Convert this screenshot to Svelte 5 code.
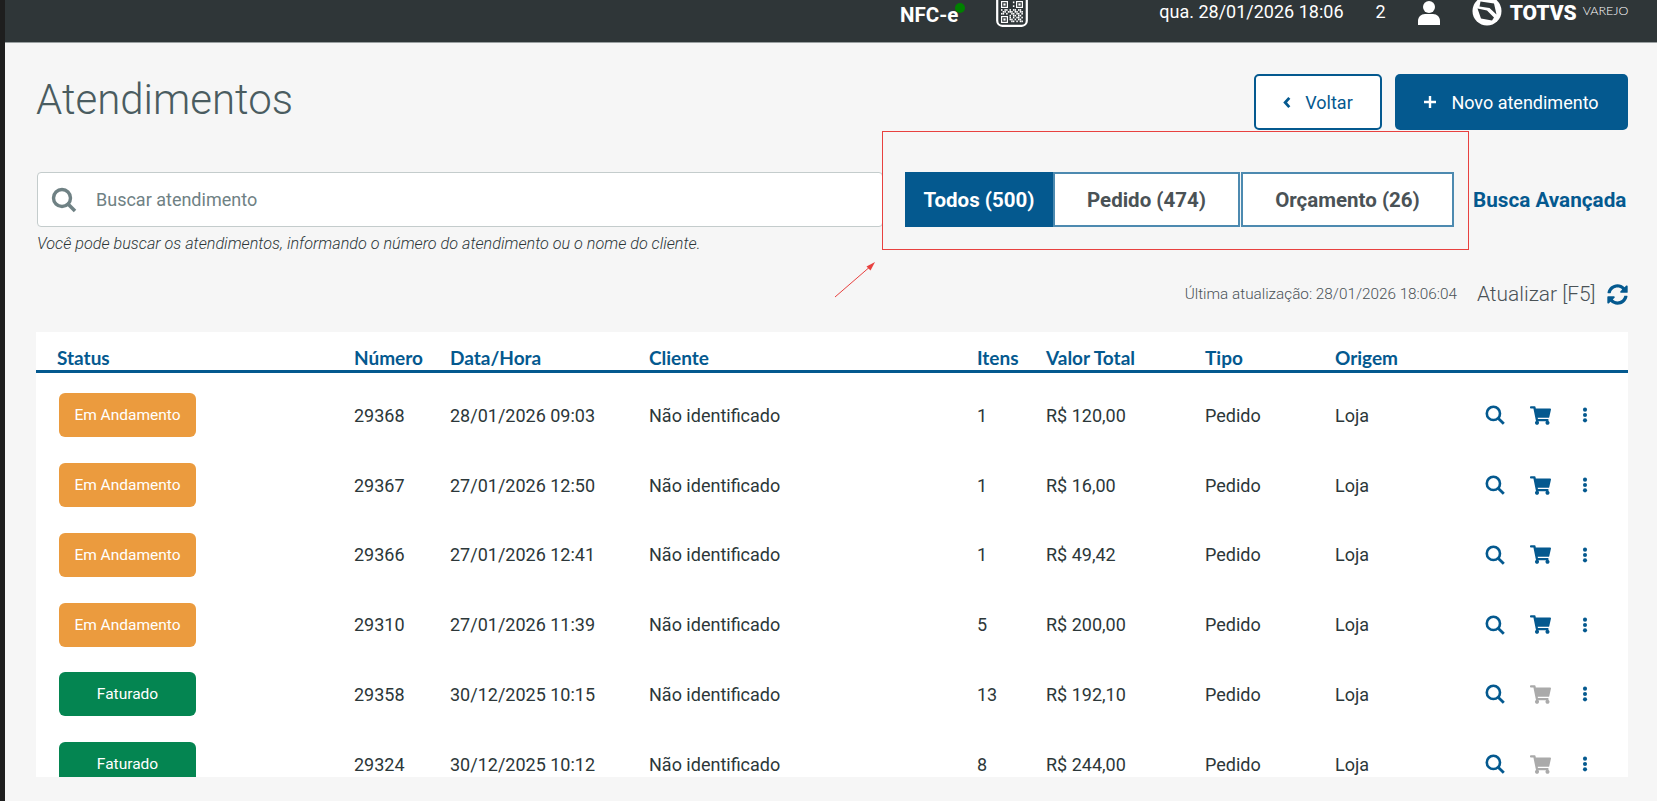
<script>
	const rows = [
		{ status: 'Em Andamento', num: '29368', date: '28/01/2026 09:03', items: 1, total: 'R$ 120,00' },
		{ status: 'Em Andamento', num: '29367', date: '27/01/2026 12:50', items: 1, total: 'R$ 16,00' },
		{ status: 'Em Andamento', num: '29366', date: '27/01/2026 12:41', items: 1, total: 'R$ 49,42' },
		{ status: 'Em Andamento', num: '29310', date: '27/01/2026 11:39', items: 5, total: 'R$ 200,00' },
		{ status: 'Faturado', num: '29358', date: '30/12/2025 10:15', items: 13, total: 'R$ 192,10' },
		{ status: 'Faturado', num: '29324', date: '30/12/2025 10:12', items: 8, total: 'R$ 244,00' }
	];

	const cols = ['Status', 'Número', 'Data/Hora', 'Cliente', 'Itens', 'Valor Total', 'Tipo', 'Origem', ''];

	// qr code cells, just a fixed pattern
	const qrBits = [
		'0000000100000',
		'0000000000000',
		'0000000100000',
		'0000000000000',
		'1011010110110',
		'0110111011011',
		'1101001101101',
		'0000010110110',
		'0000010101101',
		'0000011010110',
		'0000001101011'
	];
	const finders = [
		[5, 1],
		[20, 1],
		[5, 16]
	];
</script>

<div class="root">
	<div class="strip"></div>
	<div class="page">
		<header class="topbar">
			<span class="nfce">NFC-e<i class="dot"></i></span>
			<svg class="qr" viewBox="0 0 32 32" width="32" height="32">
				<rect x="1.2" y="-10" width="29.6" height="35.8" rx="5" fill="none" stroke="#fff" stroke-width="2.2" />
				{#each qrBits as line, y}
					{#each line.split('') as bit, x}
						{#if bit === '1'}
							<rect x={x * 1.7 + 5} y={y * 1.9 + 1.5} width="1.5" height="1.7" fill="#fff" />
						{/if}
					{/each}
				{/each}
				{#each finders as [fx, fy]}
					<rect x={fx + 0.6} y={fy + 0.6} width="5.8" height="5.8" fill="none" stroke="#fff" stroke-width="1.2" />
					<rect x={fx + 2.4} y={fy + 2.4} width="2.2" height="2.2" fill="#fff" />
				{/each}
			</svg>
			<span class="when">qua. 28/01/2026 18:06</span>
			<span class="count">2</span>
			<svg class="user" viewBox="0 0 24 26" width="24" height="26">
				<circle cx="12" cy="7" r="6" fill="#fff" />
				<path d="M1 25v-4c0-4 3-7 7-7h8c4 0 7 3 7 7v4z" fill="#fff" />
			</svg>
			<svg class="logo" viewBox="0 0 30 30" width="30" height="30">
				<circle cx="15" cy="11" r="14.5" fill="#fff" />
				<path d="M8.5 1.5 22 3.5l2.5 11-7-6.5-10-1.5zM5.5 8.5l9.5 2 7 7-2 3-11-2z" fill="#2f3638" />
			</svg>
			<span class="totvs">TOTVS</span>
			<span class="varejo">VAREJO</span>
		</header>

		<main>
			<div class="title-row">
				<h1>Atendimentos</h1>
				<div class="actions-top">
					<button class="btn ghost">
						<svg viewBox="0 0 10 14" width="10" height="13"><path d="M7.5 2 3 7l4.5 5" fill="none" stroke="currentColor" stroke-width="3" /></svg>
						Voltar
					</button>
					<button class="btn solid">
						<svg viewBox="0 0 14 14" width="14" height="14"><path d="M7 1v12M1 7h12" fill="none" stroke="currentColor" stroke-width="2.4" /></svg>
						Novo atendimento
					</button>
				</div>
			</div>

			<div class="search-row">
				<div class="search">
					<svg viewBox="0 0 26 26" width="26" height="26">
						<circle cx="11" cy="11" r="8.5" fill="none" stroke="#6f8184" stroke-width="3.4" />
						<path d="m17 17 7 7" stroke="#6f8184" stroke-width="3.6" />
					</svg>
					<span>Buscar atendimento</span>
				</div>
				<div class="segments">
					<button class="seg on s1">Todos (500)</button>
					<button class="seg s2">Pedido (474)</button>
					<button class="seg s3">Orçamento (26)</button>
				</div>
				<a href="#busca" class="advanced">Busca Avançada</a>
			</div>
			<p class="hint">Você pode buscar os atendimentos, informando o número do atendimento ou o nome do cliente.</p>

			<div class="update-row">
				<span class="last">Última atualização: 28/01/2026 18:06:04</span>
				<span class="refresh">Atualizar [F5]</span>
				<svg viewBox="0 0 512 512" width="21" height="21">
					<path fill="#04598f" d="M370.72 133.28C339.458 104.008 298.888 87.962 255.848 88c-77.458.068-144.328 53.178-162.791 126.85-1.344 5.363-6.122 9.15-11.651 9.15H24.103c-7.498 0-13.194-6.807-11.807-14.176C33.933 94.924 134.813 8 256 8c66.448 0 126.791 26.136 171.315 68.685L463.03 40.97C478.149 25.851 504 36.559 504 57.941V192c0 13.255-10.745 24-24 24H345.941c-21.382 0-32.09-25.851-16.971-40.971l41.75-41.749zM32 296h134.059c21.382 0 32.09 25.851 16.971 40.971l-41.75 41.75c31.262 29.273 71.835 45.319 114.876 45.28 77.418-.07 144.315-53.144 162.787-126.849 1.344-5.363 6.122-9.15 11.651-9.15h57.304c7.498 0 13.194 6.807 11.807 14.176C478.067 417.076 377.187 504 256 504c-66.448 0-126.791-26.136-171.315-68.685L48.97 471.03C33.851 486.149 8 475.441 8 454.059V320c0-13.255 10.745-24 24-24z" />
				</svg>
			</div>

			<section class="table">
				<div class="row head">
					{#each cols as c}
						<div>{c}</div>
					{/each}
				</div>
				{#each rows as r}
					<div class="row">
						<div><span class="badge" class:done={r.status === 'Faturado'}>{r.status}</span></div>
						<div>{r.num}</div>
						<div>{r.date}</div>
						<div>Não identificado</div>
						<div>{r.items}</div>
						<div>{r.total}</div>
						<div>Pedido</div>
						<div>Loja</div>
						<div class="icons">
							<svg viewBox="0 0 20 20" width="20" height="20">
								<circle cx="8.4" cy="8.4" r="6.6" fill="none" stroke="#04598f" stroke-width="2.6" />
								<path d="m13.4 13.4 5.4 5.4" stroke="#04598f" stroke-width="2.8" />
							</svg>
							<svg viewBox="0 0 576 512" width="21" height="19" class="cart" class:off={r.status === 'Faturado'}>
								<path fill="currentColor" d="M528.12 301.319l47.273-208C578.806 78.301 567.391 64 551.99 64H159.208l-9.166-44.81C147.758 8.021 137.93 0 126.529 0H24C10.745 0 0 10.745 0 24v16c0 13.255 10.745 24 24 24h69.883l70.248 343.435C147.325 417.1 136 435.222 136 456c0 30.928 25.072 56 56 56s56-25.072 56-56c0-15.674-6.447-29.835-16.824-40h209.647C430.447 426.165 424 440.326 424 456c0 30.928 25.072 56 56 56s56-25.072 56-56c0-22.172-12.888-41.332-31.579-50.405l5.517-24.276c3.413-15.018-8.002-29.319-23.403-29.319H218.117l-6.545-32h293.145c11.206 0 20.92-7.754 23.403-18.681z" />
							</svg>
							<svg class="dots" viewBox="0 0 6 18" width="6" height="16">
								<circle cx="3" cy="3" r="2.3" fill="#04598f" />
								<circle cx="3" cy="9" r="2.3" fill="#04598f" />
								<circle cx="3" cy="15" r="2.3" fill="#04598f" />
							</svg>
						</div>
					</div>
				{/each}
			</section>
		</main>
	</div>

	<!-- red annotation drawn over the screenshot -->
	<div class="mark"></div>
	<svg class="arrow" viewBox="0 0 44 38" width="44" height="38">
		<path d="M1 37 38 5" stroke="#e8413f" stroke-width="1" fill="none" />
		<path d="M41 2 32.5 6.5 36.5 10.5z" fill="#e8413f" />
	</svg>
</div>

<style>
	:global(body) {
		margin: 0;
		background: #f6f6f6;
		overflow: hidden;
	}

	.root {
		position: relative;
		display: flex;
		height: 801px;
		font-family: Roboto, sans-serif;
		color: #2c3739;
		overflow: hidden;
	}

	.strip {
		width: 5px;
		flex: none;
		background: #1e1e1e;
	}

	.page {
		flex: 1;
		min-width: 0;
		background: #f6f6f6;
	}

	.topbar {
		display: flex;
		align-items: flex-start;
		height: 42px;
		border-bottom: 1px solid #9aa0a1;
		background: #2f3638;
		color: #fff;
	}

	.nfce {
		position: relative;
		margin: 4px 0 0 895px;
		font-size: 20.5px;
		font-weight: 700;
		line-height: 22px;
	}

	.dot {
		position: absolute;
		top: -1px;
		right: -7px;
		width: 10px;
		height: 10px;
		border-radius: 50%;
		background: #008000;
	}

	.qr {
		margin-left: 38px;
	}

	.when {
		margin: 1px 0 0 131px;
		font-size: 18px;
		line-height: 21px;
	}

	.count {
		margin: 1px 0 0 32px;
		font-size: 18px;
		line-height: 21px;
	}

	.user {
		margin: 0 0 0 31px;
	}

	.logo {
		margin-left: 31px;
	}

	.totvs {
		margin: 2px 0 0 8px;
		font-size: 21px;
		font-weight: 900;
		line-height: 22px;
	}

	.varejo {
		margin: 3px 0 0 6px;
		font-family: Lato, sans-serif;
		font-weight: 300;
		font-size: 12.5px;
		line-height: 16px;
	}

	main {
		padding: 32px 29.5px 0 31px;
	}

	.title-row {
		display: flex;
		justify-content: space-between;
		align-items: flex-start;
		height: 56px;
	}

	h1 {
		margin: 1px 0 0;
		font-size: 42px;
		font-weight: 300;
		line-height: 48px;
		color: #4a5c60;
	}

	.actions-top {
		display: flex;
		gap: 13px;
		margin-top: -1px;
	}

	.btn {
		display: inline-flex;
		align-items: center;
		justify-content: center;
		gap: 13px;
		height: 56px;
		border-radius: 5px;
		font: 400 18px Roboto, sans-serif;
		box-sizing: border-box;
	}

	.ghost {
		width: 128px;
		border: 2.5px solid #04598f;
		background: #fff;
		color: #04598f;
	}

	.solid {
		width: 233px;
		border: 0;
		background: #04598f;
		color: #fff;
		gap: 14px;
	}

	.search-row {
		display: flex;
		align-items: stretch;
		margin: 41px 0 0 1px;
		height: 55px;
	}

	.search {
		display: flex;
		align-items: center;
		gap: 19px;
		width: 846px;
		padding-left: 13px;
		border: 1px solid #c4cccc;
		border-radius: 4px;
		background: #fff;
		box-sizing: border-box;
		font-size: 18px;
		color: #6f8184;
	}

	.segments {
		display: flex;
		margin-left: 22px;
	}

	.seg {
		height: 55px;
		border: 2px solid #4d8ab0;
		background: #fff;
		font: 700 20.5px Roboto, sans-serif;
		color: #4a5256;
		padding: 0;
	}

	.seg.on {
		border-color: #04598f;
		background: #04598f;
		color: #fff;
	}

	.s1 {
		width: 148px;
	}

	.s2 {
		width: 187px;
	}

	.s3 {
		width: 213px;
		margin-left: 1px;
	}

	.advanced {
		margin-left: 19px;
		align-self: center;
		color: #04598f;
		font-size: 20.7px;
		font-weight: 700;
		text-decoration: none;
		white-space: nowrap;
	}

	.hint {
		margin: 8px 0 0 1px;
		font-size: 16.2px;
		line-height: 18px;
		font-style: italic;
		font-weight: 300;
	}

	.update-row {
		display: flex;
		justify-content: flex-end;
		align-items: center;
		height: 24px;
		margin-top: 29px;
		color: #4a5256;
	}

	.last {
		font-size: 15.3px;
		font-weight: 300;
	}

	.refresh {
		margin: 0 11px 0 20px;
		font-size: 20.9px;
		font-weight: 300;
	}

	.table {
		height: 445px;
		margin-top: 26px;
		background: #fff;
		overflow: hidden;
		font-size: 18px;
	}

	.row {
		display: grid;
		grid-template-columns: 318px 96px 199px 328px 69px 159px 130px 150px 1fr;
		align-items: center;
		height: 69.75px;
	}

	.row.head {
		height: 38px;
		margin-bottom: 7.5px;
		border-bottom: 3px solid #04598f;
		font-family: Lato, sans-serif;
		font-weight: 700;
		font-size: 19px;
		line-height: 25px;
		color: #04598f;
		align-items: end;
	}

	.head div:first-child {
		padding-left: 21px;
	}

	.badge {
		display: flex;
		align-items: center;
		justify-content: center;
		width: 137px;
		height: 44px;
		margin-left: 23px;
		border-radius: 6px;
		background: #eb9b3e;
		color: #fff;
		font-size: 15.5px;
	}

	.badge.done {
		background: #048551;
	}

	.icons {
		display: flex;
		align-items: center;
		gap: 25px;
	}

	.dots {
		margin-left: 6px;
	}

	.cart {
		color: #04598f;
	}

	.cart.off {
		color: #aaa;
	}

	.mark {
		position: absolute;
		left: 882px;
		top: 131px;
		width: 585px;
		height: 117px;
		border: 1px solid #e8413f;
	}

	.arrow {
		position: absolute;
		left: 834px;
		top: 260px;
	}
</style>
